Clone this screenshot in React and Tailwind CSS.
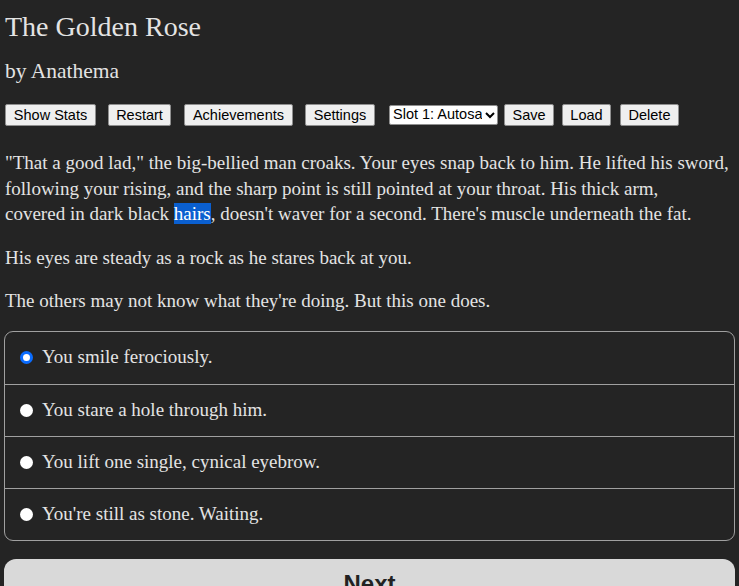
import { useState } from 'react';

const serif = { fontFamily: '"Liberation Serif", "Times New Roman", serif' };
const sans = { fontFamily: '"Liberation Sans", Arial, sans-serif' };

const options = [
  "You smile ferociously.",
  "You stare a hole through him.",
  "You lift one single, cynical eyebrow.",
  "You're still as stone. Waiting.",
];

function Btn({ children, className = "" }) {
  return (
    <button
      style={sans}
      className={`h-[22px] bg-[#efefef] text-black text-[14.5px] leading-none border border-[#8f8f8f] rounded-[2px] ${className}`}
    >
      {children}
    </button>
  );
}

function Radio({ checked }) {
  if (checked) {
    return (
      <span className="w-[13px] h-[13px] rounded-full bg-white border-[3px] border-[#0a6cff] shrink-0" />
    );
  }
  return <span className="w-[13px] h-[13px] rounded-full bg-white shrink-0" />;
}

export default function App() {
  const [choice, setChoice] = useState(0);

  return (
    <div style={serif} className="min-h-screen bg-[#242424] text-[#e3e3e3] px-[4px]">
      <h1 className="pt-[11px] pl-[1px] text-[28px] leading-[32px]">The Golden Rose</h1>
      <h2 className="mt-[15px] pl-[1px] text-[21.5px] leading-[26px]">by Anathema</h2>

      <div className="mt-[20px] flex items-center pl-[1px]">
        <Btn className="w-[91px] mr-[12px]">Show Stats</Btn>
        <Btn className="w-[63px] mr-[13px]">Restart</Btn>
        <Btn className="w-[109px] mr-[12px]">Achievements</Btn>
        <Btn className="w-[70px] mr-[14px]">Settings</Btn>
        <div
          style={sans}
          className="h-[20px] w-[109px] mr-[6px] bg-white border border-[#8f8f8f] rounded-[2px] flex items-center text-black text-[14.5px] pl-[3px] overflow-hidden"
        >
          <span className="whitespace-nowrap overflow-hidden w-[89px]">Slot 1: Autosave</span>
          <svg width="12" height="12" viewBox="0 0 12 12" className="ml-[2px] shrink-0">
            <path d="M2 4 L6 8 L10 4" fill="none" stroke="#000" strokeWidth="2" />
          </svg>
        </div>
        <Btn className="w-[50px] mr-[8px]">Save</Btn>
        <Btn className="w-[49px] mr-[9px]">Load</Btn>
        <Btn className="w-[59px]">Delete</Btn>
      </div>

      <div className="mt-[24px] pl-[1px] pr-[2px] text-[19px] leading-[25.5px]">
        <p>
          "That a good lad," the big-bellied man croaks. Your eyes snap back to him. He lifted his sword,
          following your rising, and the sharp point is still pointed at your throat. His thick arm,
          <br />
          covered in dark black <span className="bg-[#0a5fd0] text-white">hairs</span>, doesn't waver for a second.
          There's muscle underneath the fat.
        </p>
        <p className="mt-[18px]">His eyes are steady as a rock as he stares back at you.</p>
        <p className="mt-[18px]">The others may not know what they're doing. But this one does.</p>
      </div>

      <div className="mt-[17px] border border-[#a0a0a0] rounded-[9px]">
        {options.map((o, i) => (
          <label
            key={o}
            onClick={() => setChoice(i)}
            className={`h-[52px] flex items-center gap-[9px] pl-[15px] text-[19px] ${i > 0 ? "border-t border-[#a0a0a0]" : ""}`}
          >
            <Radio checked={choice === i} />
            <span>{o}</span>
          </label>
        ))}
      </div>

      <button
        style={sans}
        className="mt-[18px] mb-[20px] w-full h-[50px] bg-[#d9d9d9] rounded-[12px] text-[#222] text-[24px] font-bold"
      >
        Next
      </button>
    </div>
  );
}
